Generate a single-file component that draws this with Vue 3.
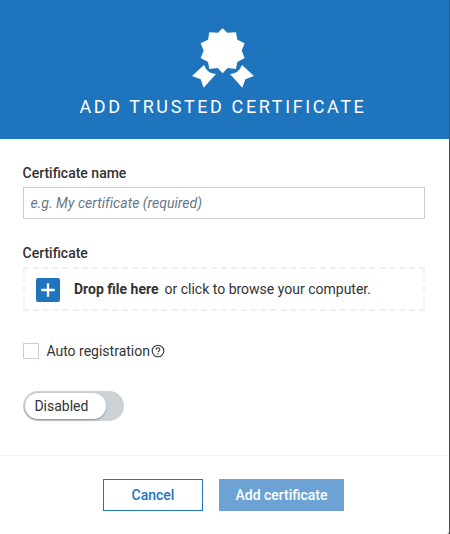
<script setup>
import { ref } from 'vue'

const name = ref('')
const autoRegister = ref(false)
</script>

<template>
  <div class="page">
    <form class="dialog" @submit.prevent>
      <header class="head">
        <svg class="seal" width="62" height="60" viewBox="0 0 186 180" fill="#fff" aria-hidden="true">
          <path d="M92 1l14 13 26-1 4 22 22 11-9 22 9 22-22 12-4 21-25-3-15 16-15-16-25 3-4-21-22-12 9-22-9-22 22-11 4-22 26 1z" />
          <path d="M36 111Q46 137 72 138L35 179L26 154L0 144Z" />
          <path d="M150 111Q140 137 114 138L151 179L160 154L186 144Z" />
        </svg>
        <h1>ADD TRUSTED CERTIFICATE</h1>
      </header>

      <main class="body">
        <label class="label" for="name">Certificate name</label>
        <input id="name" v-model="name" class="field" placeholder="e.g. My certificate (required)" />

        <div class="label file-label">Certificate</div>
        <div class="drop">
          <svg class="plus" width="24" height="24" viewBox="0 0 24 24" aria-hidden="true">
            <rect width="24" height="24" rx="2" fill="#1e75bd" />
            <path d="M12 5.3v13.4M5.3 12h13.4" stroke="#fff" stroke-width="2.3" />
          </svg>
          <b>Drop file here</b><span>or click to browse your computer.</span>
        </div>

        <label class="check">
          <input v-model="autoRegister" type="checkbox" />
          <span>Auto registration</span>
          <svg width="14" height="14" viewBox="0 0 14 14" fill="none" stroke="#333" stroke-width="1.1" aria-hidden="true">
            <circle cx="7" cy="7" r="5.8" />
            <path d="M5.1 5.7C5.1 4.4 5.9 3.8 7 3.8S8.9 4.5 8.9 5.5C8.9 6.7 7 6.8 7 8.2" />
            <path d="M7 9.2v1.3" />
          </svg>
        </label>

        <div class="switch"><span>Disabled</span></div>
      </main>

      <footer class="foot">
        <button type="button" class="btn outline">Cancel</button>
        <button type="submit" class="btn solid">Add certificate</button>
      </footer>
    </form>
  </div>
</template>

<style>
body {
  background: #4c4d50;
}
</style>

<style scoped>
.page {
  width: 450px;
  height: 534px;
  overflow: hidden;
}
.dialog {
  display: flex;
  flex-direction: column;
  width: 449px;
  height: 534px;
  background: #fff;
  border-radius: 0 0 2px 0;
  color: #333;
  font: 14px/20px Roboto, sans-serif;
}
.head {
  box-sizing: border-box;
  display: flex;
  flex-direction: column;
  align-items: center;
  height: 139px;
  padding-top: 28px;
  background: #1e75bd;
}
.seal {
  display: block;
  flex: none;
  margin-right: 3px;
}
h1 {
  margin: 7px 3.2px 0 0;
  color: #fff;
  font-size: 18px;
  font-weight: 400;
  line-height: 24px;
  letter-spacing: 2.61px;
  white-space: nowrap;
}
.body {
  box-sizing: border-box;
  height: 316px;
  padding: 24px 24px 0 23px;
}
.label {
  display: block;
  height: 24px;
  margin-left: -0.5px;
  font-weight: 500;
}
.field {
  box-sizing: border-box;
  display: block;
  width: 402px;
  height: 32px;
  padding: 0 6.5px;
  border: 1px solid #c9cfd4;
  border-radius: 0;
  background: #fff;
  color: #333;
  font: 14px Roboto, sans-serif;
  letter-spacing: 0.03px;
  outline: none;
}
.field::placeholder {
  color: #667985;
  font-style: italic;
  opacity: 1;
}
.file-label {
  margin-top: 24px;
}
.drop {
  box-sizing: border-box;
  display: flex;
  align-items: center;
  width: 402px;
  height: 44px;
  padding-left: 11px;
  border: 2px dashed #f0f0f0;
}
.plus {
  margin: 2px 14px 0 0;
}
.drop b {
  margin-right: 6px;
  font-weight: 700;
}
.check {
  display: flex;
  align-items: center;
  height: 20px;
  margin-top: 30px;
}
.check input {
  appearance: none;
  box-sizing: border-box;
  width: 16px;
  height: 16px;
  margin: 0 7.4px 0 0;
  border: 1px solid #c9cfd4;
}
.check svg {
  margin-left: 0.8px;
}
.switch {
  box-sizing: border-box;
  width: 101px;
  height: 30px;
  margin-top: 30px;
  padding: 2px;
  border-radius: 15px;
  background: #cbd1d5;
}
.switch span {
  display: block;
  box-sizing: border-box;
  width: 81px;
  height: 26px;
  padding-left: 9.4px;
  border-radius: 13px;
  background: #fff;
  box-shadow: 0 1px 2px rgba(0, 0, 0, 0.3);
  line-height: 26px;
}
.foot {
  box-sizing: border-box;
  display: flex;
  justify-content: center;
  gap: 16px;
  height: 79px;
  padding: 23px 2px 0 0;
  border-top: 1px solid #f0f0f0;
}
.btn {
  box-sizing: border-box;
  height: 32px;
  padding: 0;
  border: 1px solid #1e75bd;
  border-radius: 0;
  font: 500 14px Roboto, sans-serif;
}
.outline {
  width: 100px;
  background: #fff;
  color: #1e75bd;
}
.solid {
  width: 125px;
  border-color: #6ca3d4;
  background: #6ca3d4;
  color: #fff;
}
</style>
